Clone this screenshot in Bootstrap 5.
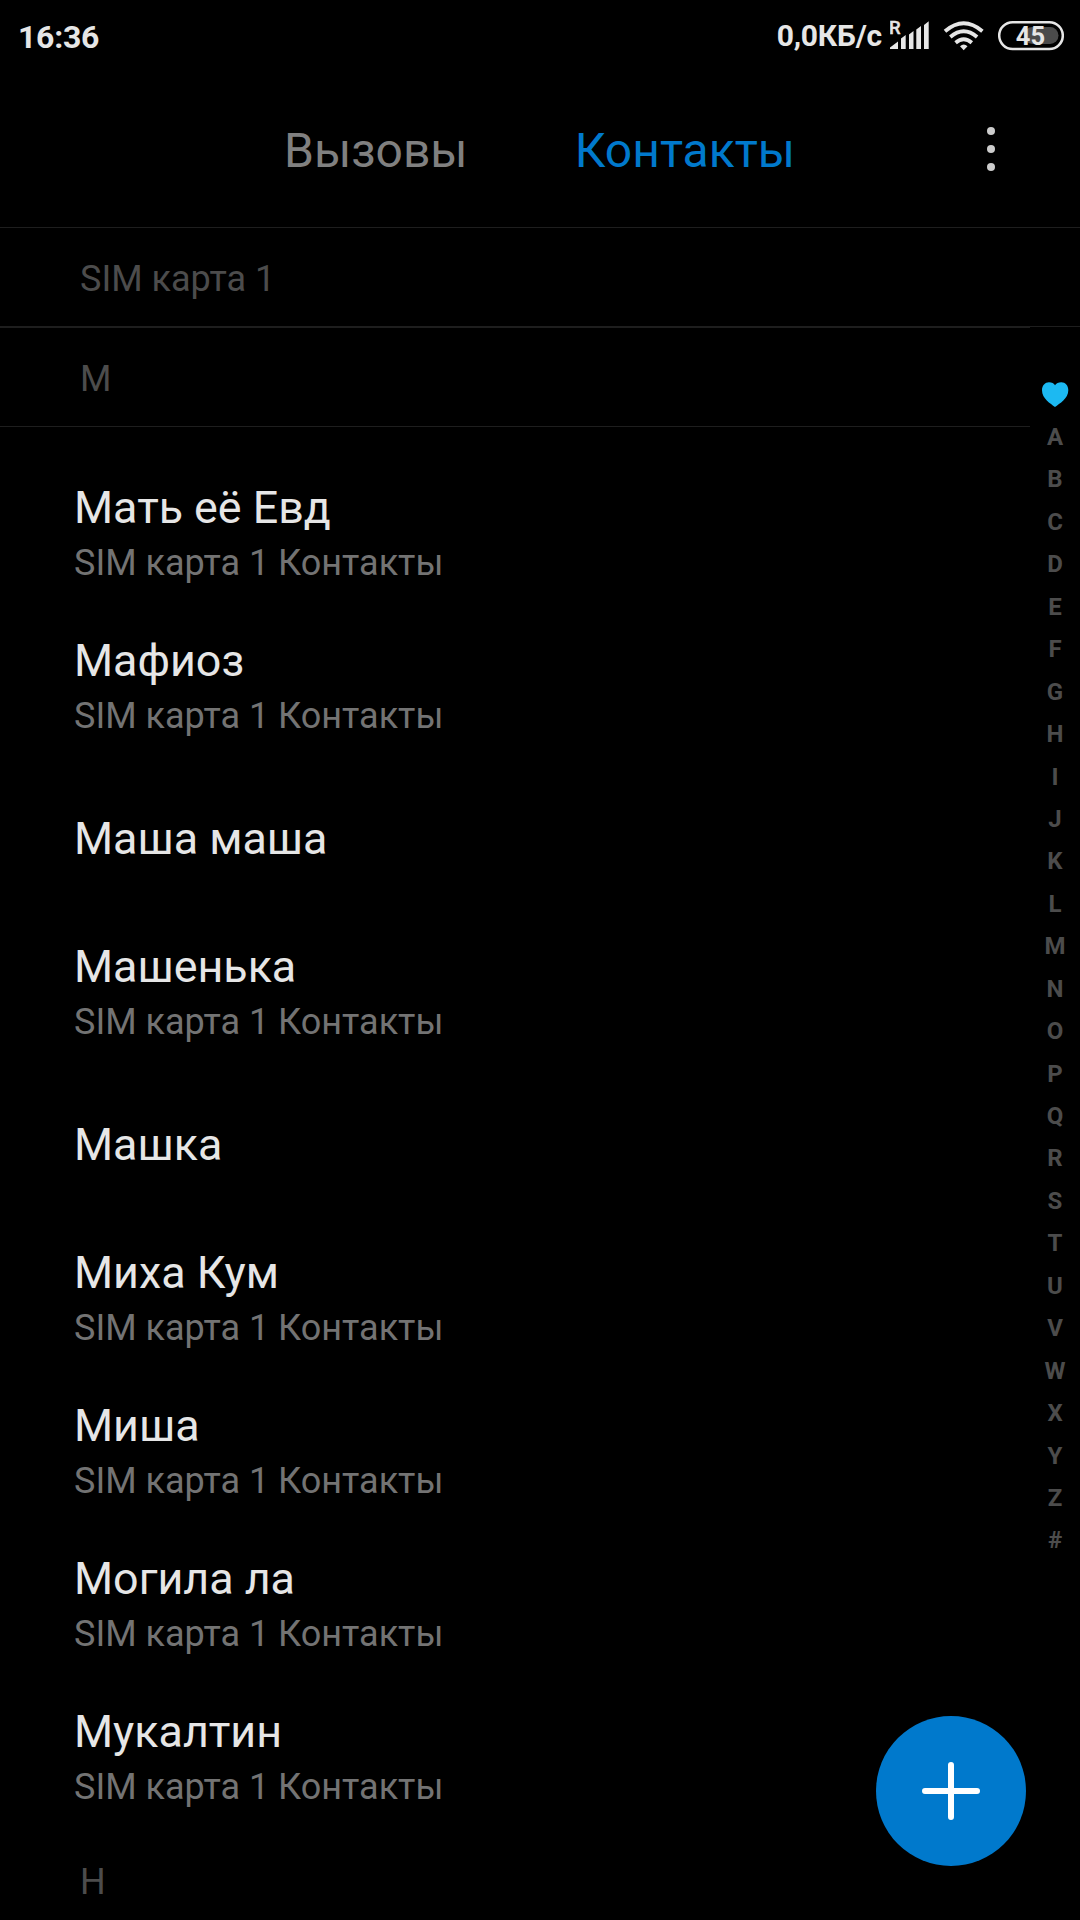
<!DOCTYPE html>
<html lang="ru">
<head>
<meta charset="utf-8">
<meta name="viewport" content="width=device-width, initial-scale=1">
<title>Контакты</title>
<link href="https://cdn.jsdelivr.net/npm/bootstrap@5.3.0/dist/css/bootstrap.min.css" rel="stylesheet">
<style>
body{background:#000;color:#e6e6e6;font-family:Roboto,"Noto Sans",sans-serif;height:1920px;overflow:hidden}
.phone{width:1080px;height:1920px}
.status-bar{height:72px;padding:0 16px 0 18px;font-weight:700}
.clock{font-size:32px;line-height:74px;letter-spacing:-.25px}
.speed{font-size:30px;line-height:72px;letter-spacing:-.2px;margin-right:8px}
.tabs-bar{height:156px;border-bottom:1px solid #1e1e1e}
.tab-link{font-size:48px;line-height:56px;color:#808080;text-decoration:none}
.tab-link.active{color:#0079cc}
.tab-set{margin-left:284px;gap:107px;padding-top:51px}
.menu-btn{margin-right:81px;padding-top:54px!important}
.sect{height:99px;padding-left:80px;font-size:36px;line-height:102px;color:#4c4c4c}
.sect-line{border-bottom:1px solid #1e1e1e}
.sect-first{height:100px;border-top:1px solid #1e1e1e}
.sect-next{line-height:98px}
.people{width:1030px}
.people-list{padding-top:29px}
.person{height:153px;padding-left:74px;gap:8px}
.person-name{font-size:44.8px;line-height:53px;color:#e6e6e6}
.person-sub{font-size:36px;line-height:42px;color:#737373}
.rail{width:50px;padding-top:46px;font-size:24px;font-weight:700;color:#4c4c4c}
.rail span{height:42.45px;line-height:42.45px;flex:none}
.rail svg{flex:none;margin-bottom:9px;margin-top:9px}
.fab{right:54px;bottom:54px;width:150px;height:150px;background:#0079cc}
</style>
<script src="https://cdn.jsdelivr.net/npm/bootstrap@5.3.0/dist/js/bootstrap.bundle.min.js"></script>
</head>
<body>
<div class="phone d-flex flex-column position-relative overflow-hidden">
  <header class="status-bar d-flex justify-content-between flex-shrink-0">
    <span class="clock">16:36</span>
    <div class="d-flex">
      <span class="speed">0,0КБ/с</span>
      <svg width="174" height="72" viewBox="890 0 174 72" fill="#e6e6e6">
        <text x="889" y="34" font-size="18.5" font-weight="500" font-family="Roboto, sans-serif" stroke="#e6e6e6" stroke-width=".4">R</text>
        <path d="M890 49V47.5L898 41.5V49ZM901 49V38.5L905.7 35V49ZM909 49V34.5L913.5 31V49ZM916.3 49V29.5L921 26V49ZM924 49V25L928.7 21.3V49Z"/>
        <g fill="none" stroke="#e6e6e6" stroke-width="3.8">
          <path d="M945 31.2Q963.7 15.2 982.4 31.2"/>
          <path d="M950.3 37Q963.7 25.6 977.1 37"/>
          <path d="M955.6 42.7Q963.7 35.8 971.8 42.7"/>
        </g>
        <path d="M960 46.3Q963.7 42.8 967.5 46.3L963.7 50.2Z"/>
        <rect x="1024" y="27" width="34.5" height="17" rx="8.5" fill="#4b4b4b"/>
        <rect x="999.2" y="22.2" width="63.6" height="26.8" rx="13.4" fill="none" stroke="#e6e6e6" stroke-width="2.5"/>
        <text x="1030.5" y="44.7" text-anchor="middle" font-size="25.5" font-weight="700" font-family="Roboto, sans-serif">45</text>
      </svg>
    </div>
  </header>

  <nav class="tabs-bar d-flex justify-content-between align-items-start flex-shrink-0">
    <div class="tab-set d-flex">
      <a class="tab-link" href="#">Вызовы</a>
      <a class="tab-link active" href="#">Контакты</a>
    </div>
    <button class="menu-btn btn p-0 border-0" aria-label="Меню">
      <svg class="d-block" width="16" height="46" viewBox="0 0 16 46" fill="#ccc"><circle cx="8" cy="5" r="4"/><circle cx="8" cy="23" r="4"/><circle cx="8" cy="41" r="4"/></svg>
    </button>
  </nav>

  <div class="sect sect-line flex-shrink-0">SIM карта 1</div>

  <main class="d-flex">
    <div class="people flex-shrink-0">
      <div class="sect sect-line sect-first">М</div>
      <div class="people-list d-flex flex-column">
        <div class="person d-flex flex-column justify-content-center"><div class="person-name">Мать её Евд</div><div class="person-sub">SIM карта 1 Контакты</div></div>
        <div class="person d-flex flex-column justify-content-center"><div class="person-name">Мафиоз</div><div class="person-sub">SIM карта 1 Контакты</div></div>
        <div class="person d-flex flex-column justify-content-center"><div class="person-name">Маша маша</div></div>
        <div class="person d-flex flex-column justify-content-center"><div class="person-name">Машенька</div><div class="person-sub">SIM карта 1 Контакты</div></div>
        <div class="person d-flex flex-column justify-content-center"><div class="person-name">Машка</div></div>
        <div class="person d-flex flex-column justify-content-center"><div class="person-name">Миха Кум</div><div class="person-sub">SIM карта 1 Контакты</div></div>
        <div class="person d-flex flex-column justify-content-center"><div class="person-name">Миша</div><div class="person-sub">SIM карта 1 Контакты</div></div>
        <div class="person d-flex flex-column justify-content-center"><div class="person-name">Могила ла</div><div class="person-sub">SIM карта 1 Контакты</div></div>
        <div class="person d-flex flex-column justify-content-center"><div class="person-name">Мукалтин</div><div class="person-sub">SIM карта 1 Контакты</div></div>
      </div>
      <div class="sect sect-next">Н</div>
    </div>
    <aside class="rail d-flex flex-column align-items-center">
      <svg width="27" height="25" viewBox="0 0 27 25" fill="#1cb9f2"><path d="M13 25C8.500 21.500 0 16.500 0 8.200C0 3.500 3.200 .3 7 .3C9.800 .3 12 1.500 13 3.300C14.200 1.500 16.500 .3 19.300 .3C23.300 .3 26.300 3.500 26.300 8.200C26.300 16.500 17.500 21.500 13 25Z"/></svg>
      <span>A</span><span>B</span><span>C</span><span>D</span><span>E</span><span>F</span><span>G</span><span>H</span><span>I</span><span>J</span><span>K</span><span>L</span><span>M</span><span>N</span><span>O</span><span>P</span><span>Q</span><span>R</span><span>S</span><span>T</span><span>U</span><span>V</span><span>W</span><span>X</span><span>Y</span><span>Z</span><span>#</span>
    </aside>
  </main>

  <button class="fab btn rounded-circle border-0 p-0 position-absolute d-flex align-items-center justify-content-center" aria-label="Добавить контакт">
    <svg width="58" height="58" viewBox="0 0 58 58" stroke="#fff" stroke-width="6" stroke-linecap="round"><path d="M29 3V55M3 29H55"/></svg>
  </button>
</div>
</body>
</html>
